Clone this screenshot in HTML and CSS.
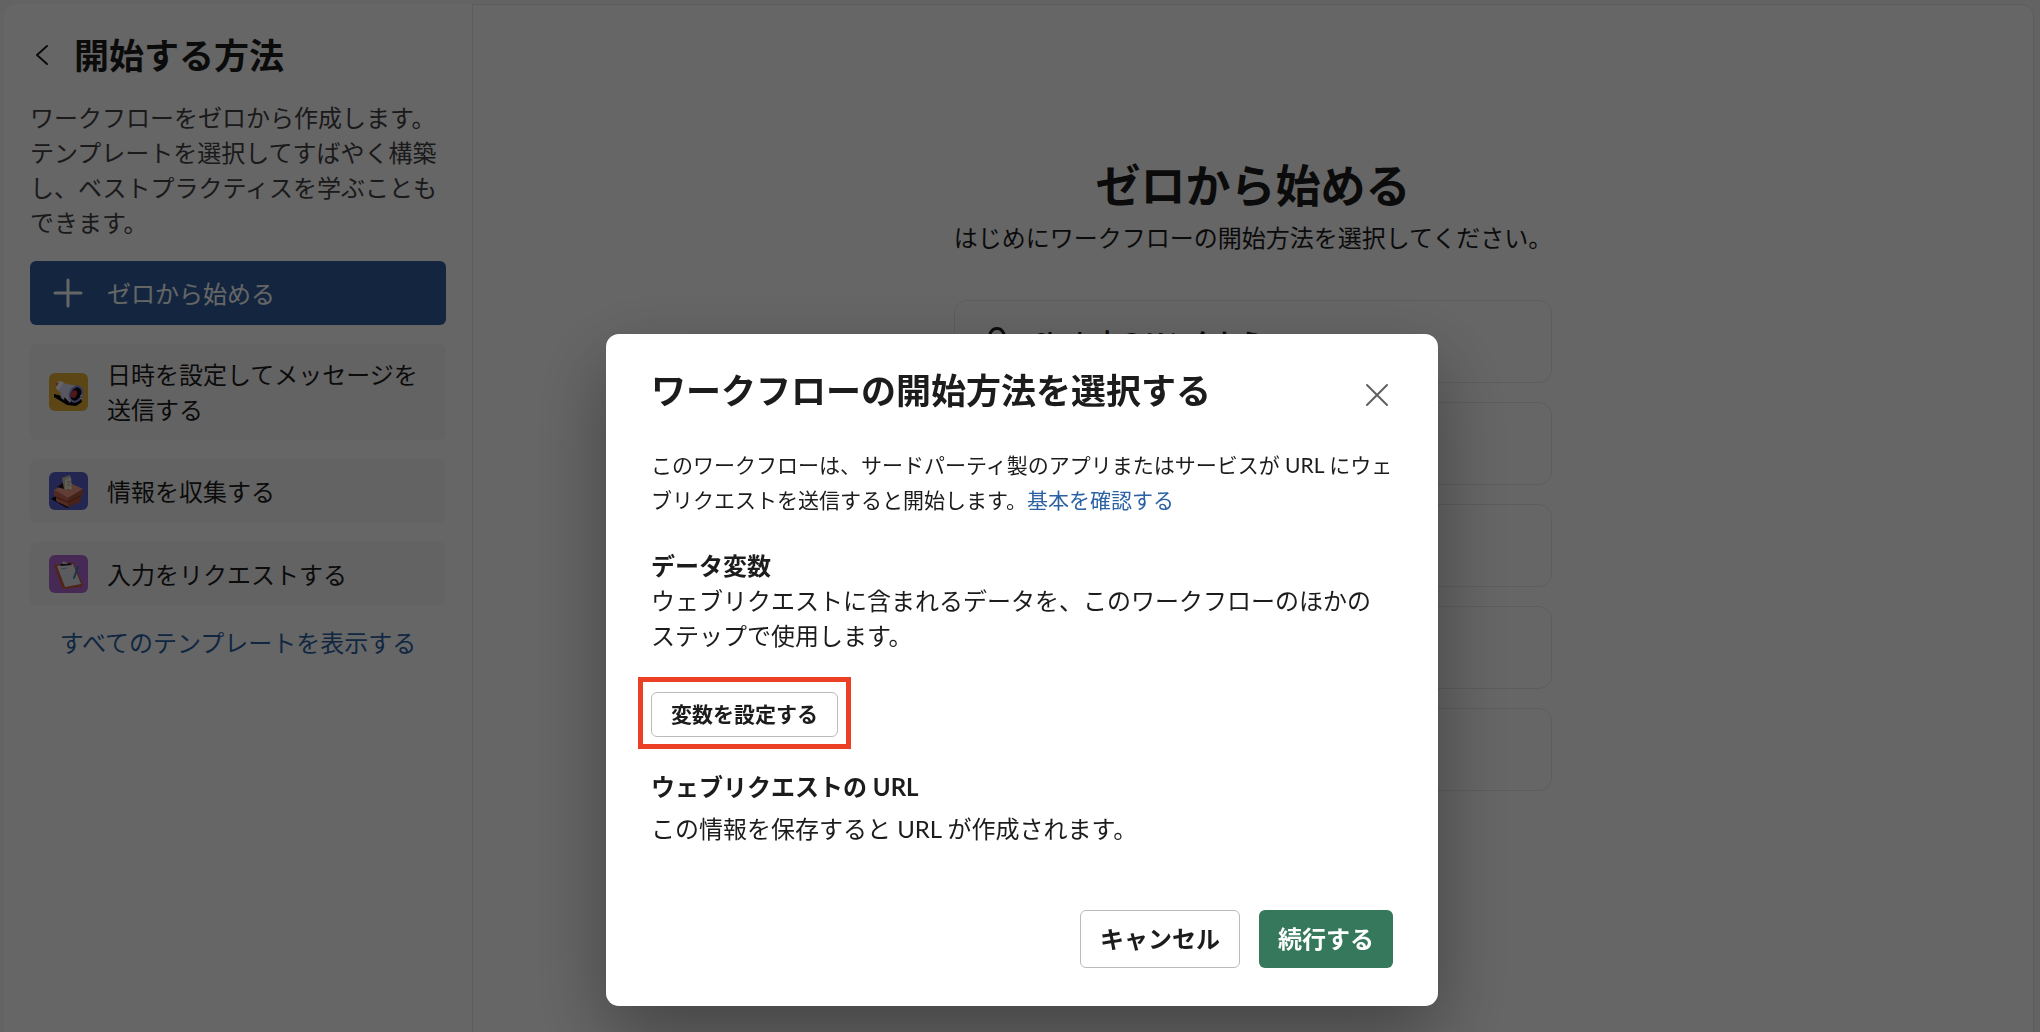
FILE: index.html
```html
<!DOCTYPE html>
<html lang="ja">
<head>
<meta charset="utf-8">
<meta name="viewport" content="width=device-width, initial-scale=1">
<title>ワークフローの開始方法を選択する</title>
<link rel="stylesheet" href="styles.css">
</head>
<body>
<div class="app">
  <aside class="sidebar">
    <header class="sidebar-head">
      <button class="back" type="button" aria-label="戻る">
        <svg width="16" height="24" viewBox="0 0 16 24" fill="none" stroke="currentColor" stroke-width="2" stroke-linecap="round" stroke-linejoin="round"><path d="M13 3 3 12l10 9"/></svg>
      </button>
      <h1 class="title">開始する方法</h1>
    </header>
    <p class="sidebar-text">ワークフローをゼロから作成します。テンプレートを選択してすばやく構築し、ベストプラクティスを学ぶこともできます。</p>
    <nav class="templates">
      <button class="template template-active" type="button">
        <svg class="thumb" viewBox="0 0 39 38" fill="none" stroke="#fff" stroke-width="3" stroke-linecap="round"><path d="M19 6v26M6 19h26"/></svg>
        <span>ゼロから始める</span>
      </button>
      <button class="template" type="button">
        <svg class="thumb" viewBox="0 0 39 38">
          <rect width="39" height="38" rx="6" fill="#e6ae38"/>
          <path d="M5 21l8 2 9 5 10-3 1 4-6 4-9-1-13-8z" fill="#050505"/>
          <path d="M11 20l5 2-1 5-3-2z" fill="#d3d3f0"/>
          <path d="M8 9l21 4-8 17-11-12-4-5z" fill="#dcdcf4"/>
          <path d="M9 8l6 1-6 9-3-5z" fill="#fbf8ff"/>
          <path d="M7 10l3-1-2 4-2 1z" fill="#e0623f"/>
          <ellipse cx="27" cy="21" rx="6" ry="8" transform="rotate(25 27 21)" fill="#0e0c1c" stroke="#908ee0" stroke-width="2"/>
          <ellipse cx="25" cy="21" rx="3" ry="4" transform="rotate(20 25 21)" fill="#c43f32"/>
          <path d="M31 23l3-1M31 25l3 1" stroke="#dcdcf4"/>
        </svg>
        <span>日時を設定してメッセージを送信する</span>
      </button>
      <button class="template" type="button">
        <svg class="thumb" viewBox="0 0 39 38">
          <rect width="39" height="38" rx="6" fill="#5a5fcc"/>
          <path d="M2 27l6-4v7l13 4-3 2z" fill="#080817"/>
          <path d="M5 18l14-8 15 7-15 9z" fill="#f09c88"/>
          <path d="M8 15l7-5 8 4-4 4z" fill="#211318"/>
          <path d="M13 6l8-3 1 12-7 2z" fill="#c9c3ab"/>
          <path d="M16 8l6-3 1 12-7 1z" fill="#efe8d2"/>
          <path d="M5 18l14 8v9L7 29v-4l-2-1z" fill="#cc6a53"/>
          <path d="M34 17v6l-2 1v6l-13 5v-9z" fill="#b0563f"/>
          <path d="M7 25l12 5 13-6" fill="none" stroke="#84382a"/>
          <path d="M18 10h4M18 13h3" stroke="#a79f8c"/>
        </svg>
        <span>情報を収集する</span>
      </button>
      <button class="template" type="button">
        <svg class="thumb" viewBox="0 0 39 38">
          <rect width="39" height="38" rx="6" fill="#b067d4"/>
          <path d="M5 10l19-3 10 23-2 2-17 2-2-1z" fill="#c25e3c"/>
          <path d="M8 11l16-2 8 20-16 3z" fill="#e2e4ee"/>
          <path d="M11 9l10-1 2 2-11 1z" fill="#29242c"/>
          <path d="M13 9l1-3 3 1 2 2z" fill="#cfcfd4"/>
          <path d="M12 14l6-1" stroke="#a5a5ad"/>
          <path d="M29 12l-4 11" stroke="#3b82a6" stroke-width="2" stroke-linecap="round"/>
        </svg>
        <span>入力をリクエストする</span>
      </button>
      <a class="all-templates" href="#">すべてのテンプレートを表示する</a>
    </nav>
  </aside>
  <main class="canvas">
    <h2 class="canvas-title">ゼロから始める</h2>
    <p class="canvas-text">はじめにワークフローの開始方法を選択してください。</p>
    <ul class="triggers">
      <li class="trigger">
        <svg width="30" height="30" viewBox="0 0 30 30" fill="none" stroke="currentColor" stroke-width="3" stroke-linecap="round"><path d="M11 8a7 7 0 0 1 14 1c0 3-2 5-6 8M19 22a7 7 0 0 1-14-1c0-3 2-5 6-8"/></svg>
        <strong>Slack 中のリンクから</strong>
      </li>
      <li class="trigger"></li>
      <li class="trigger"></li>
      <li class="trigger"></li>
      <li class="trigger"></li>
    </ul>
  </main>
</div>
<div class="overlay">
  <section class="modal" role="dialog" aria-modal="true" aria-labelledby="modal-title">
    <header class="modal-head">
      <h2 class="title" id="modal-title">ワークフローの開始方法を選択する</h2>
      <button class="close" type="button" aria-label="閉じる">
        <svg width="24" height="24" viewBox="0 0 24 24" fill="none" stroke="currentColor" stroke-width="2" stroke-linecap="round"><path d="M2 2l20 20M22 2 2 22"/></svg>
      </button>
    </header>
    <p class="intro">このワークフローは、サードパーティ製のアプリまたはサービスが URL にウェブリクエストを送信すると開始します。<a href="#">基本を確認する</a></p>
    <h3 class="label">データ変数</h3>
    <p class="text">ウェブリクエストに含まれるデータを、このワークフローのほかのステップで使用します。</p>
    <div class="highlight">
      <button class="button button-small" type="button">変数を設定する</button>
    </div>
    <h3 class="label">ウェブリクエストの URL</h3>
    <p class="text text-spaced">この情報を保存すると URL が作成されます。</p>
    <footer class="modal-foot">
      <button class="button" type="button">キャンセル</button>
      <button class="button button-primary" type="button">続行する</button>
    </footer>
  </section>
</div>
</body>
</html>
```
FILE: styles.css
```css
* {
  box-sizing: border-box;
}

body,
h1,
h2,
h3,
p,
ul {
  margin: 0;
  padding: 0;
}

body {
  background: #f8f8f8;
  color: #1d1c1d;
  font-family: Lato, "Noto Sans CJK JP", sans-serif;
  font-size: 24px;
  line-height: 35px;
}

button {
  font: inherit;
  color: inherit;
  border: 0;
  background: none;
  padding: 0;
  cursor: pointer;
}

a {
  color: #2c62a4;
  text-decoration: none;
}

.app {
  display: grid;
  grid-template-columns: 468px 1fr;
  min-height: 100vh;
  padding: 4px 6px 0 4px;
}

.sidebar {
  background: #fff;
  border-radius: 13px 0 0 0;
  padding: 27px 26px;
}

.sidebar-head {
  display: flex;
  align-items: center;
  gap: 24px;
  padding-left: 4px;
}

.back {
  display: flex;
}

.title {
  font-size: 35px;
  line-height: 48px;
  font-weight: 700;
}

.sidebar-text {
  margin: 21px 0;
  color: #454245;
}

.templates {
  display: flex;
  flex-direction: column;
  gap: 19px;
}

.template {
  display: flex;
  align-items: center;
  gap: 19px;
  min-height: 64px;
  padding: 13px 19px;
  border-radius: 6px;
  background: #f8f8f8;
  text-align: left;
}

.template-active {
  background: #34609f;
  color: #fff;
}

.thumb {
  flex: none;
  width: 39px;
  height: 38px;
}

.all-templates {
  text-align: center;
}

.canvas {
  background: #fff;
  border: 1px solid #e8e8e8;
  border-bottom: 0;
  border-radius: 0 13px 0 0;
  padding-top: 148px;
  text-align: center;
}

.canvas-title {
  font-size: 45px;
  line-height: 67px;
}

.canvas-text {
  margin-bottom: 45px;
}

.triggers {
  display: grid;
  gap: 19px;
  max-width: 598px;
  margin: 0 auto;
  list-style: none;
}

.trigger {
  display: flex;
  align-items: center;
  gap: 25px;
  height: 83px;
  padding: 0 24px;
  border: 1px solid #e8e8e8;
  border-radius: 13px;
}

.overlay {
  position: fixed;
  inset: 0;
  display: flex;
  justify-content: center;
  align-items: flex-end;
  padding: 26px 0 26px 4px;
  background: rgba(0, 0, 0, 0.6);
}

.modal {
  width: 832px;
  padding: 32px 45px 38px;
  border-radius: 13px;
  background: #fff;
  box-shadow: 0 29px 77px rgba(0, 0, 0, 0.35);
}

.modal-head {
  display: flex;
  justify-content: space-between;
  margin-bottom: 33px;
}

.close {
  align-self: flex-end;
  display: flex;
  margin: 0 4px 7px 0;
  color: #616061;
}

.intro {
  margin-bottom: 31px;
  font-size: 21px;
}

.label {
  font-size: 24px;
  font-weight: 700;
}

.text-spaced {
  margin-top: 7px;
}

.highlight {
  width: fit-content;
  margin: 24px 0 20px -13px;
  padding: 10px 8px 7px;
  border: 5px solid #eb4026;
}

.button {
  height: 58px;
  padding: 0 19px 2px;
  border: 1px solid #bbb;
  border-radius: 6px;
  background: #fff;
  font-weight: 700;
}

.button-small {
  display: block;
  height: 45px;
  font-size: 21px;
}

.button-primary {
  border: 0;
  background: #35785b;
  color: #fff;
}

.modal-foot {
  display: flex;
  justify-content: flex-end;
  gap: 19px;
  margin-top: 64px;
}
```
